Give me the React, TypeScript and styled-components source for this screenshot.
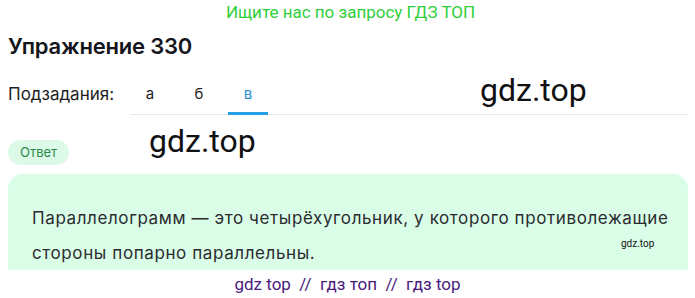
import styled, { createGlobalStyle } from 'styled-components';

const GlobalStyle = createGlobalStyle`
  body {
    margin: 0;
    background: #ffffff;
    font-family: Inter, "Noto Sans", sans-serif;
  }
`;

const Page = styled.div`
  position: relative;
  width: 695px;
  height: 298px;
  overflow: hidden;
`;

const Promo = styled.div`
  text-align: center;
  padding: 1px 0 0 6px;
  font-family: Roboto, "Liberation Sans", sans-serif;
  font-size: 17px;
  line-height: 22px;
  color: #2fcf3a;
`;

const Title = styled.h1`
  margin: 8px 0 0 8px;
  font-size: 22px;
  line-height: 30px;
  font-weight: 600;
  color: #14161c;
  letter-spacing: -0.2px;
`;

const SubRow = styled.div`
  display: flex;
  align-items: flex-end;
  margin: 20px 7px 0 8px;
`;

const SubLabel = styled.span`
  font-size: 17px;
  line-height: 26px;
  color: #1c1e24;
  width: 122px;
  padding-bottom: 8px;
`;

const Tabs = styled.div`
  flex: 1;
  display: flex;
  gap: 9px;
  border-bottom: 1px solid #e6e8ec;
`;

const Tab = styled.div<{ $active?: boolean }>`
  width: 40px;
  text-align: center;
  font-size: 15px;
  line-height: 26px;
  padding-bottom: 5px;
  color: ${(p) => (p.$active ? '#2a8fd0' : '#1c1e24')};
  border-bottom: 3px solid ${(p) => (p.$active ? '#23a0e6' : 'transparent')};
  margin-bottom: -1px;
`;

const Badge = styled.div`
  display: inline-block;
  margin: 25px 0 0 8px;
  padding: 0 12px;
  height: 25px;
  line-height: 25px;
  border-radius: 13px;
  background: #dcfae7;
  color: #2b8a4c;
  font-size: 13px;
`;

const Card = styled.div`
  position: relative;
  margin: 9px 7px 0 8px;
  height: 96px;
  padding: 27px 0 0 24px;
  box-sizing: border-box;
  border-radius: 15px 15px 0 0;
  background: #dafde7;
  font-size: 17px;
  letter-spacing: 0.6px;
  line-height: 35px;
  color: #2a2c30;
`;

const Footer = styled.div`
  text-align: center;
  padding-top: 3px;
  font-family: Roboto, "Liberation Sans", sans-serif;
  font-size: 17px;
  line-height: 22px;
  color: #4a1a7c;
`;

const Watermark = styled.span<{ $size: number }>`
  position: absolute;
  font-family: Roboto, "Liberation Sans", sans-serif;
  font-size: ${(p) => p.$size}px;
  letter-spacing: 0;
  color: #111;
  line-height: 1;
  pointer-events: none;
`;

export default function App() {
  return (
    <>
      <GlobalStyle />
      <Page>
        <Promo>Ищите нас по запросу ГДЗ ТОП</Promo>
        <Title>Упражнение 330</Title>
        <SubRow>
          <SubLabel>Подзадания:</SubLabel>
          <Tabs>
            <Tab>а</Tab>
            <Tab>б</Tab>
            <Tab $active>в</Tab>
          </Tabs>
        </SubRow>
        <Badge>Ответ</Badge>
        <Card>
          Параллелограмм — это четырёхугольник, у которого противолежащие
          <br />
          стороны попарно параллельны.
          <Watermark $size={10} style={{ left: 613, top: 65 }}>gdz.top</Watermark>
        </Card>
        <Footer>gdz top&nbsp; //&nbsp; гдз топ&nbsp; //&nbsp; гдз top</Footer>
        <Watermark $size={32} style={{ left: 480, top: 74 }}>gdz.top</Watermark>
        <Watermark $size={32} style={{ left: 149, top: 125 }}>gdz.top</Watermark>
      </Page>
    </>
  );
}
